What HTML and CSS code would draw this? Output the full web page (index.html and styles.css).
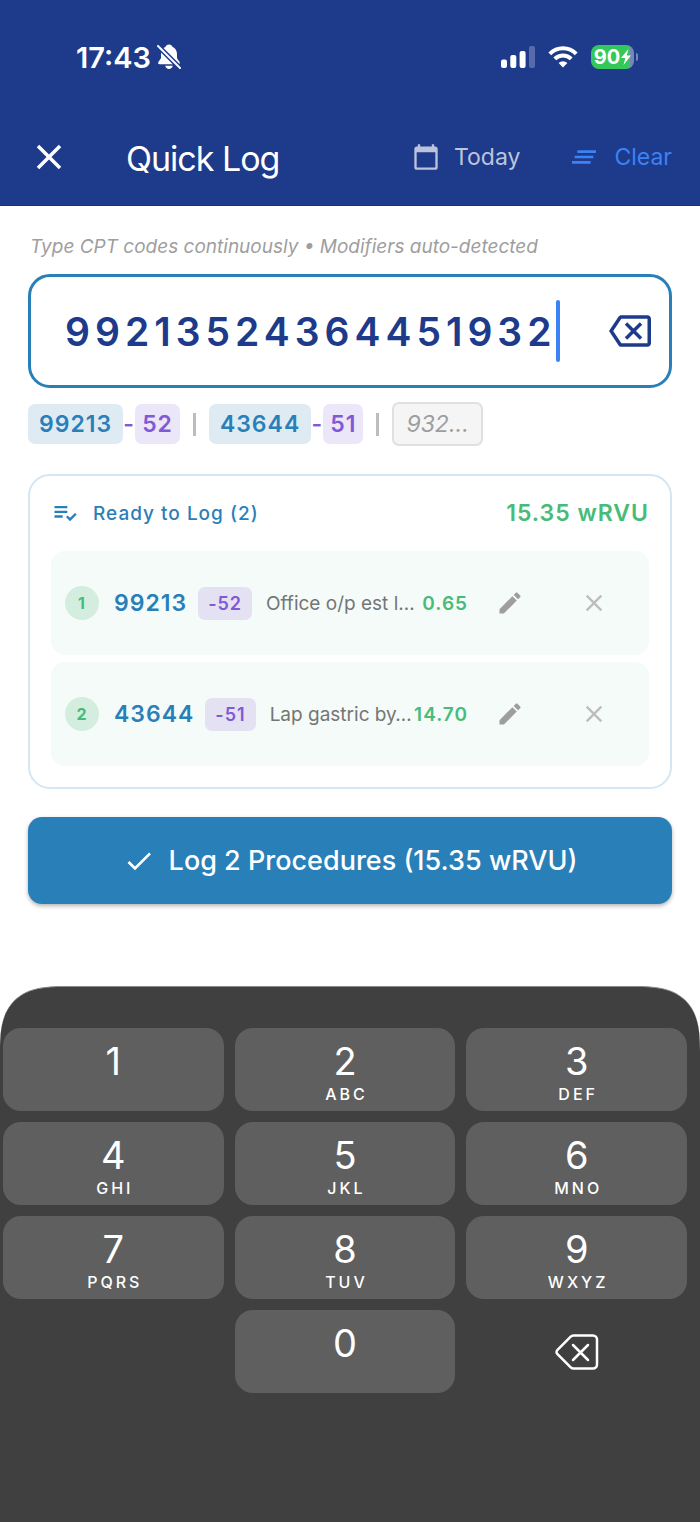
FILE: index.html
```
<!DOCTYPE html>
<html lang="en">
<head>
  <meta charset="UTF-8" />
  <meta name="viewport" content="width=device-width, initial-scale=1.0" />
  <title>Quick Log</title>
  <link rel="stylesheet" href="styles.css">
</head>
<body>
  <header>
    <!-- Status bar -->
    <div class="status">
      <div class="status-left">
        <span class="time">17:43</span>
        <svg class="bell" viewBox="0 0 24 26"><path fill="#fff" d="M12 0.5c1.8 0 3 1 3.4 2.2 3 1.200 4.600 4 4.600 7.600v3.500c0 2 2.800 3 2.800 5.200 0 .8-.6 1.200-1.400 1.200H2.600c-.8 0-1.400-.4-1.400-1.200 0-2.200 2.800-3.200 2.800-5.200v-3.500c0-3.600 1.600-6.400 4.600-7.600C9 1.500 10.200.5 12 .5zM8.200 21.800h7.600c-.4 2-1.900 3.200-3.800 3.200s-3.400-1.200-3.800-3.200z"/><path stroke="#1e3a8a" stroke-width="5" d="M0 1l24 24"/><path stroke="#fff" stroke-width="2" stroke-linecap="round" d="M1 2l22 22"/></svg>
      </div>
      <div class="status-right">
        <svg class="signal" viewBox="0 0 34 22" fill="#fff"><rect y="13.500" width="6" height="8.500" rx="2"/><rect x="9.300" y="9" width="6" height="13" rx="2"/><rect x="18.600" y="5" width="6" height="17" rx="2"/><rect x="28" width="6" height="22" rx="2" opacity=".25"/></svg>
        <svg class="wifi" viewBox="0 0 30 22" fill="none" stroke="#fff" stroke-width="4"><path d="M1.800 7.800a18.700 18.700 0 0 1 26.400 0"/><path d="M6.800 12.800a11.600 11.600 0 0 1 16.400 0"/><path fill="#fff" stroke="none" d="M15 21.500l-4.400-4.400a6.200 6.200 0 0 1 8.800 0z"/></svg>
        <div class="battery">
          <span class="battery-body">90<svg viewBox="0 0 10 16"><path fill="#fff" d="M7.500 0L0 9h4.300L2.500 16 10 6.500H5.700z"/></svg></span>
          <span class="battery-tip"></span>
        </div>
      </div>
    </div>

    <!-- App bar -->
    <div class="appbar">
      <button class="icon-btn close" aria-label="Close">
        <svg viewBox="0 0 24 24"><path d="M19 6.410L17.590 5 12 10.590 6.410 5 5 6.410 10.590 12 5 17.590 6.410 19 12 13.410 17.590 19 19 17.590 13.410 12z"/></svg>
      </button>
      <h1>Quick Log</h1>
      <button class="bar-btn today">
        <svg viewBox="0 0 24 24"><path d="M20 3h-1V1h-2v2H7V1H5v2H4c-1.100 0-2 .9-2 2v16c0 1.100.9 2 2 2h16c1.100 0 2-.9 2-2V5c0-1.100-.9-2-2-2zm0 18H4V8h16v13z"/></svg>
        Today
      </button>
      <button class="bar-btn clear">
        <svg viewBox="0 0 24 24"><path d="M5 13h14v-2H5v2zm-2 4h14v-2H3v2zM7 7v2h14V7H7z"/></svg>
        Clear
      </button>
    </div>
  </header>

  <main>
    <label class="hint" for="codes">Type CPT codes continuously • Modifiers auto-detected</label>
    <div class="code-box">
      <input id="codes" type="text" inputmode="numeric" value="99213524364451932">
      <span class="caret"></span>
      <button class="icon-btn erase" aria-label="Delete last digit">
        <svg viewBox="0 0 24 24"><path d="M22 3H7c-.69 0-1.230.35-1.590.88L0 12l5.410 8.110c.36.53.9.89 1.590.89h15c1.100 0 2-.9 2-2V5c0-1.100-.9-2-2-2zm0 16H7.070L2.400 12l4.660-7H22v14zm-11.590-2L14 13.410 17.590 17 19 15.590 15.410 12 19 8.410 17.590 7 14 10.590 10.410 7 9 8.410 12.590 12 9 15.590z"/></svg>
      </button>
    </div>

    <!-- Parsed codes -->
    <div class="parsed">
      <span class="chip code">99213</span><span class="dash">-</span><span class="chip mod">52</span>
      <span class="bar"></span>
      <span class="chip code">43644</span><span class="dash">-</span><span class="chip mod">51</span>
      <span class="bar"></span>
      <span class="chip partial">932...</span>
    </div>

    <section class="card">
      <div class="card-head">
        <svg viewBox="0 0 24 24"><path d="M3 10h11v2H3zM3 6h11v2H3zM3 14h7v2H3zM20.590 11.930l-4.250 4.240-2.120-2.120-1.410 1.410L16.340 19 22 13.340z"/></svg>
        <h2>Ready to Log (2)</h2>
        <span class="total">15.35 wRVU</span>
      </div>
      <div class="row">
        <span class="num">1</span>
        <span class="row-code">99213</span>
        <span class="row-mod">-52</span>
        <span class="desc">Office o/p est l…</span>
        <span class="rvu">0.65</span>
        <button class="row-btn edit" aria-label="Edit 99213"><svg viewBox="0 0 24 24"><path d="M3 17.250V21h3.750L17.810 9.940l-3.750-3.750L3 17.250zM20.710 7.040c.39-.39.39-1.020 0-1.410l-2.340-2.340c-.39-.39-1.020-.39-1.410 0l-1.830 1.830 3.750 3.750 1.830-1.830z"/></svg></button>
        <button class="row-btn remove" aria-label="Remove 99213"><svg viewBox="0 0 24 24"><path d="M19 6.410L17.590 5 12 10.590 6.410 5 5 6.410 10.590 12 5 17.590 6.410 19 12 13.410 17.590 19 19 17.590 13.410 12z"/></svg></button>
      </div>
      <div class="row">
        <span class="num">2</span>
        <span class="row-code">43644</span>
        <span class="row-mod">-51</span>
        <span class="desc">Lap gastric by…</span>
        <span class="rvu">14.70</span>
        <button class="row-btn edit" aria-label="Edit 43644"><svg viewBox="0 0 24 24"><path d="M3 17.250V21h3.750L17.810 9.940l-3.750-3.750L3 17.250zM20.710 7.040c.39-.39.39-1.020 0-1.410l-2.340-2.340c-.39-.39-1.020-.39-1.410 0l-1.830 1.830 3.750 3.750 1.830-1.830z"/></svg></button>
        <button class="row-btn remove" aria-label="Remove 43644"><svg viewBox="0 0 24 24"><path d="M19 6.410L17.590 5 12 10.590 6.410 5 5 6.410 10.590 12 5 17.590 6.410 19 12 13.410 17.590 19 19 17.590 13.410 12z"/></svg></button>
      </div>
    </section>

    <button class="log-btn">
      <svg viewBox="0 0 24 24"><path d="M9 16.170L4.830 12l-1.420 1.410L9 19 21 7l-1.410-1.410z"/></svg>
      Log 2 Procedures (15.35 wRVU)
    </button>
  </main>

  <!-- Number pad -->
  <div class="keypad">
    <button class="key">1</button>
    <button class="key">2<small>ABC</small></button>
    <button class="key">3<small>DEF</small></button>
    <button class="key">4<small>GHI</small></button>
    <button class="key">5<small>JKL</small></button>
    <button class="key">6<small>MNO</small></button>
    <button class="key">7<small>PQRS</small></button>
    <button class="key">8<small>TUV</small></button>
    <button class="key">9<small>WXYZ</small></button>
    <button class="key zero">0</button>
    <button class="key back" aria-label="Backspace">
      <svg viewBox="0 0 44 36" fill="none" stroke="#fff" stroke-width="2.500" stroke-linecap="round" stroke-linejoin="round"><path d="M18.500 1.500H38a4 4 0 0 1 4 4v25a4 4 0 0 1-4 4H18.500a4 4 0 0 1-2.800-1.200L2.500 20.200a3 3 0 0 1 0-4.400L15.700 2.700a4 4 0 0 1 2.800-1.200z"/><path d="M18 11l15 15M33 11L18 26"/></svg>
    </button>
  </div>
</body>
</html>
```
FILE: styles.css
```
* {
  margin: 0; padding: 0;
  box-sizing: border-box;
  font-family: Inter, "Liberation Sans", sans-serif;
}
body {
  background: #fff;
  min-height: 100vh;
  display: flex;
  flex-direction: column;
}
button {
  background: none;
  border: none;
  cursor: pointer;
}
svg { display: block; flex: none; }

/* Header */
header {
  background: #1e3a8a;
  color: #fff;
  border-bottom: 1px solid #1a3276;
}
.status {
  display: flex;
  justify-content: space-between;
  align-items: center;
  height: 112px;
  padding: 2px 62px 0 76px;
}
.status-left, .status-right {
  display: flex;
  align-items: center;
}
.status-left { gap: 6px; }
.status-right { gap: 13px; }
.time {
  font-size: 29px;
  font-weight: 600;
}
.bell { width: 24px; height: 26px; }
.signal { width: 34px; height: 22px; }
.wifi { width: 30px; height: 22px; }
.battery {
  display: flex;
  align-items: center;
  gap: 2px;
}
.battery-body {
  display: flex;
  align-items: center;
  justify-content: center;
  gap: 1px;
  width: 43px;
  height: 24px;
  border-radius: 8px;
  background: linear-gradient(90deg, #34c759 90%, #7488b8 90%);
  font-size: 20px;
  font-weight: 700;
}
.battery-body svg { width: 10px; height: 16px; }
.battery-tip {
  width: 2px;
  height: 8px;
  border-radius: 0 2px 2px 0;
  background: #7488b8;
}
.appbar {
  display: flex;
  align-items: center;
  height: 93px;
  padding: 0 28px 4px;
}
.icon-btn svg { width: 42px; height: 42px; }
.close svg { fill: #fff; }
h1 {
  flex: 1;
  margin-left: 56px;
  padding-top: 4px;
  font-size: 34px;
  font-weight: 400;
  letter-spacing: -1px;
}
.bar-btn {
  display: flex;
  align-items: center;
  gap: 14px;
  font-size: 23px;
}
.bar-btn svg {
  width: 32px;
  height: 32px;
  fill: currentColor;
}
.today { color: #bcc4dc; }
.clear { color: #3b82f6; margin-left: 48px; }
.today svg { width: 28px; height: 28px; }

/* Code entry */
main {
  display: flex;
  flex-direction: column;
  padding: 28px 28px 0;
}
.hint {
  padding-left: 2px;
  font-size: 19px;
  line-height: 26px;
  font-style: italic;
  color: #9e9e9e;
}
.code-box {
  display: flex;
  align-items: center;
  height: 114px;
  margin-top: 14px;
  padding: 0 18px 0 34px;
  border: 3px solid #2980b9;
  border-radius: 22px;
}
.code-box input {
  field-sizing: content;
  min-width: 0;
  border: none;
  outline: none;
  background: none;
  font-size: 39px;
  font-weight: 600;
  letter-spacing: 5px;
  color: #1e3a8a;
}
.caret {
  width: 4px;
  height: 62px;
  border-radius: 2px;
  background: #3b82f6;
}
.erase { margin-left: auto; }
.erase svg { fill: #1e3a8a; }

.parsed {
  display: flex;
  align-items: center;
  height: 44px;
  margin-top: 14px;
  font-size: 23px;
  font-weight: 600;
  letter-spacing: 1px;
}
.chip {
  padding: 0 11px;
  border-radius: 7px;
  line-height: 40px;
}
.code { background: #dfebf3; color: #2980b9; }
.mod { background: #ebe6f8; color: #805ad5; padding: 0 7px; }
.dash { color: #805ad5; width: 12px; text-align: center; }
.bar {
  width: 3px;
  height: 23px;
  margin: 0 13px;
  background: #bdbdbd;
}
.partial {
  padding: 0 12px;
  border: 2px solid #e0e0e0;
  background: #f5f5f5;
  color: #9e9e9e;
  font-weight: 400;
  font-style: italic;
  letter-spacing: 0;
}

/* Ready list */
.card {
  margin-top: 28px;
  padding: 21px;
  border: 2px solid #d4e6f1;
  border-radius: 22px;
  display: flex;
  flex-direction: column;
  gap: 7px;
}
.card-head {
  display: flex;
  align-items: center;
  height: 32px;
  margin-bottom: 15px;
  color: #2980b9;
}
.card-head svg { width: 28px; height: 28px; fill: #2980b9; }
h2 {
  flex: 1;
  margin-left: 14px;
  font-size: 19px;
  font-weight: 500;
  letter-spacing: 1px;
}
.total {
  color: #48bb78;
  font-size: 23px;
  font-weight: 600;
  letter-spacing: 1px;
}
.row {
  display: flex;
  align-items: center;
  height: 104px;
  padding: 0 13px 0 14px;
  border-radius: 14px;
  background: #f4fbf8;
  letter-spacing: 1px;
}
.num {
  flex: none;
  width: 34px;
  line-height: 34px;
  border-radius: 50%;
  background: #d3eedf;
  color: #48bb78;
  font-size: 16px;
  font-weight: 700;
  text-align: center;
}
.row-code {
  margin-left: 15px;
  color: #2980b9;
  font-size: 23px;
  font-weight: 600;
}
.row-mod {
  margin: 0 14px 0 11px;
  padding: 0 10px;
  border-radius: 7px;
  background: #e4e1f3;
  color: #805ad5;
  font-size: 18px;
  line-height: 33px;
  font-weight: 600;
}
.desc {
  flex: 1;
  white-space: nowrap;
  color: #757575;
  font-size: 19px;
  letter-spacing: 0;
}
.rvu {
  color: #48bb78;
  font-size: 19px;
  font-weight: 600;
}
.row-btn {
  flex: none;
  width: 84px;
  height: 84px;
}
.row-btn svg { width: 28px; height: 28px; margin: 0 auto; }
.edit svg { fill: #9e9e9e; }
.remove svg { fill: #bdbdbd; }

.log-btn {
  display: flex;
  align-items: center;
  justify-content: center;
  gap: 14px;
  height: 87px;
  margin-top: 28px;
  border-radius: 14px;
  background: #2980b9;
  box-shadow: 0 2px 4px rgba(0, 0, 0, 0.3);
  color: #fff;
  font-size: 27px;
  font-weight: 500;
}
.log-btn svg { width: 32px; height: 32px; fill: #fff; }

/* Number pad */
.keypad {
  flex: 1;
  display: grid;
  grid-template-columns: repeat(3, 1fr);
  grid-auto-rows: 83px;
  gap: 11px;
  margin-top: 82px;
  padding: 41px 13px 130px 3px;
  border-top: 1px solid #8a8a8a;
  border-radius: 66px 66px 0 0;
  corner-shape: superellipse(1.5);
  background: #404040;
}
.key {
  display: flex;
  flex-direction: column;
  align-items: center;
  padding-top: 10px;
  border-radius: 18px;
  background: #5f5f5f;
  color: #fff;
  font-size: 38px;
  line-height: 46px;
}
.key small {
  padding-left: 3px;
  font-size: 16px;
  line-height: 20px;
  font-weight: 500;
  letter-spacing: 3px;
}
.zero { grid-column: 2; }
.back {
  background: none;
  justify-content: center;
  padding: 0;
}
.back svg { width: 44px; height: 36px; }
```
